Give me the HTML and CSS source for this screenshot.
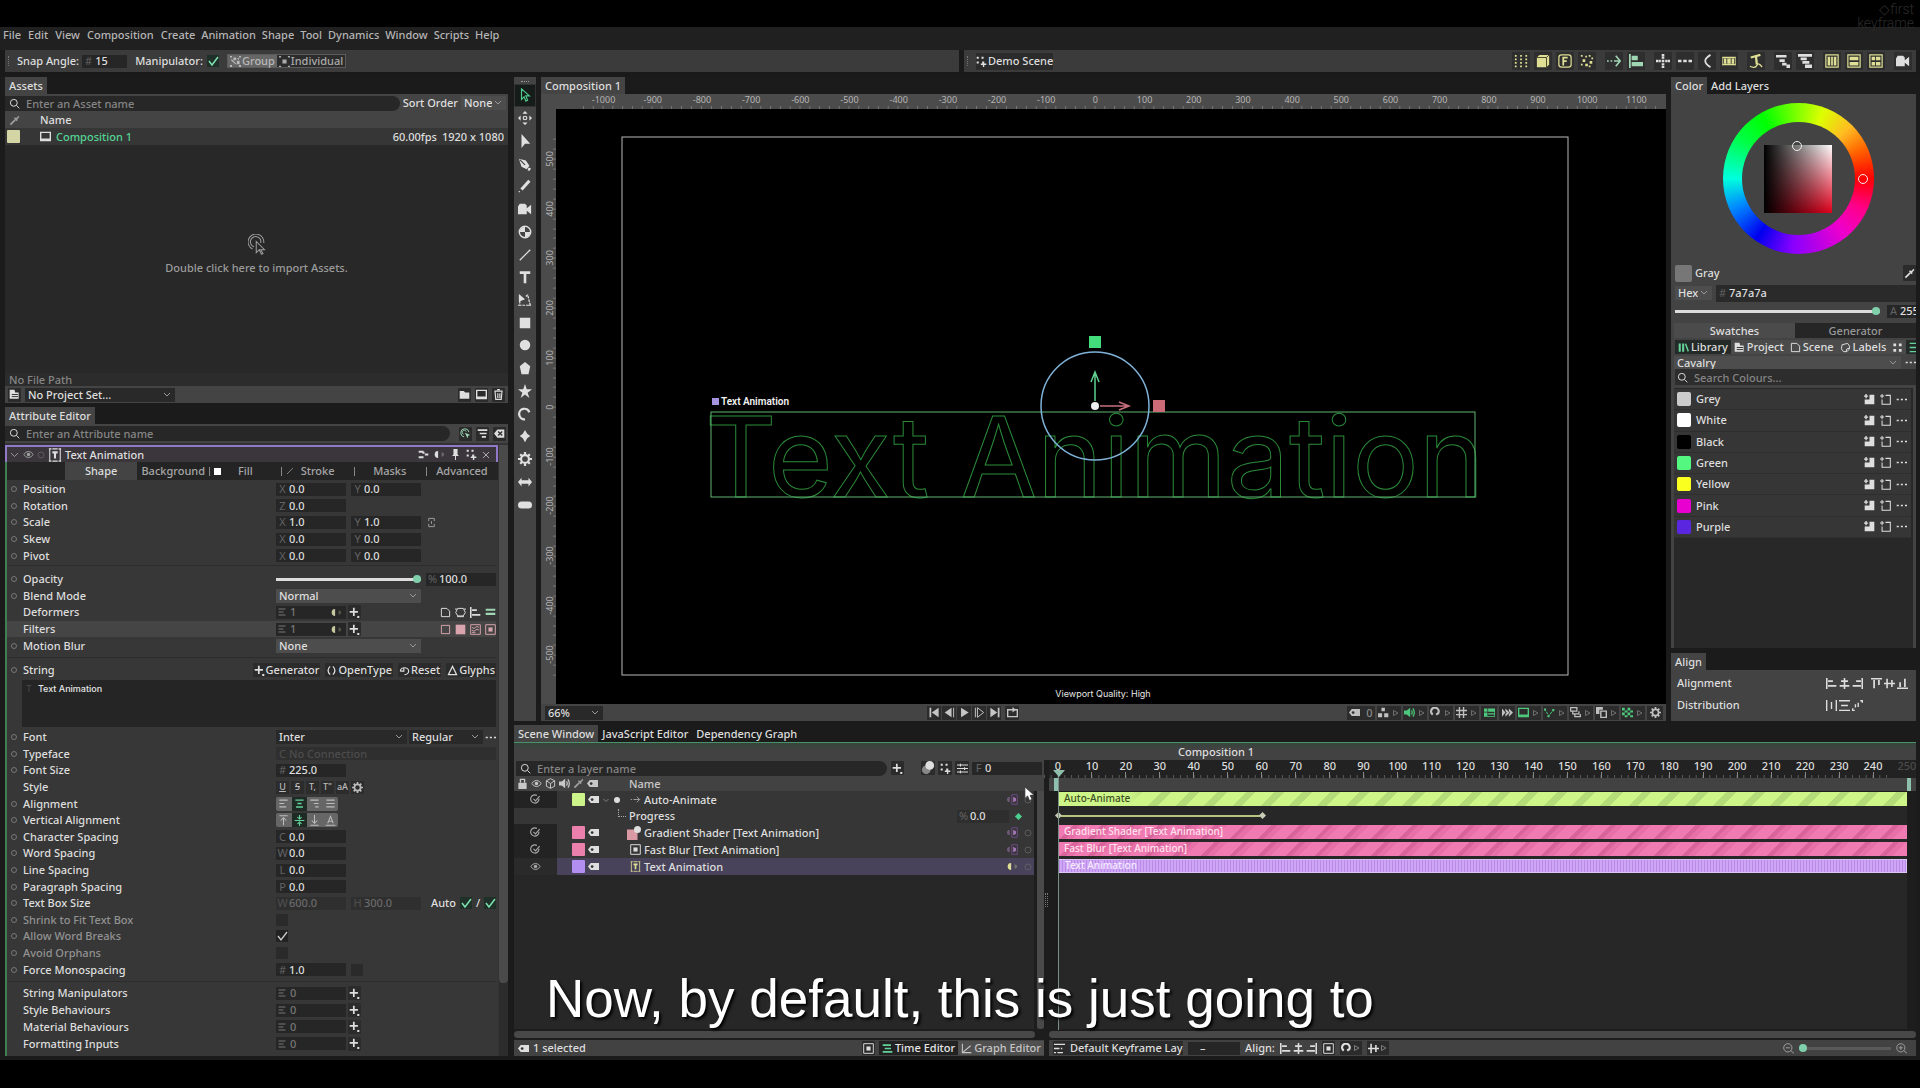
FILE: index.html
```html
<!DOCTYPE html>
<html lang="en">
<head>
<meta charset="utf-8">
<title>Cavalry – Composition 1</title>
<link rel="stylesheet" href="styles.css">
</head>
<body>
<svg class="sprite" aria-hidden="true">
  <symbol id="search" viewBox="0 0 16 16"><circle cx="7" cy="7" r="5"/><path d="M11 11l4 4"/></symbol>
  <symbol id="chev" viewBox="0 0 16 16"><path d="M3 6l5 5 5-5"/></symbol>
  <symbol id="play" viewBox="0 0 16 16"><path class="f" d="M3 1l11 7-11 7z"/></symbol>
  <symbol id="tri" viewBox="0 0 16 16"><path d="M3 3l9 5-9 5z"/></symbol>
  <symbol id="first" viewBox="0 0 16 16"><path d="M2 1v14" stroke-width="2.5"/><path class="f" d="M14 1v14L4 8z"/></symbol>
  <symbol id="prev" viewBox="0 0 16 16"><path d="M14 1v14"/><path class="f" d="M11 1v14L1 8z"/></symbol>
  <symbol id="next" viewBox="0 0 16 16"><path d="M2 1v14"/><path d="M5 1v14l9-7z"/></symbol>
  <symbol id="last" viewBox="0 0 16 16"><path d="M14 1v14" stroke-width="2.5"/><path class="f" d="M2 1v14l10-7z"/></symbol>
  <symbol id="loop" viewBox="0 0 16 16"><path d="M5 4H1v10h14V4h-4M5 4h5" stroke-width="2"/><path class="f" d="M8 0l5 4-5 4z"/></symbol>
  <symbol id="eye" viewBox="0 0 16 16"><path d="M1 8q7-9 14 0q-7 9-14 0z"/><circle class="f" cx="8" cy="8" r="2.5"/></symbol>
  <symbol id="ring" viewBox="0 0 16 16"><circle cx="8" cy="8" r="6"/></symbol>
  <symbol id="dot" viewBox="0 0 16 16"><circle class="f" cx="8" cy="8" r="6"/></symbol>
  <symbol id="textbox" viewBox="0 0 16 16"><path d="M2 1v14M14 1v14M1 1h3M12 1h3M1 15h3M12 15h3M5 15h6M5 1h6" stroke-width="1.2"/><path d="M5 5h6M8 5v7" stroke-width="2.4"/></symbol>
  <symbol id="dropper" viewBox="0 0 16 16"><path d="M2 14l7-7" stroke-width="2.5"/><path class="f" d="M8 5l3-1 3-3 1 2-3 3-1 3z"/><path d="M8 4l4 4" stroke-width="2"/></symbol>
  <symbol id="comp" viewBox="0 0 16 16"><path d="M1 2h14v12H1zM1 12h14" stroke-width="2"/></symbol>
  <symbol id="hit" viewBox="0 0 24 28"><path d="M8 17a7 7 0 1 1 9-5M6 20a10.500 10.500 0 1 1 15-8M11 10v15l4-4 3 6 2-1-3-5h5z"/></symbol>
  <symbol id="folder" viewBox="0 0 16 16"><path class="f" d="M1 3h6l2 2h6v9H1z"/></symbol>
  <symbol id="project" viewBox="0 0 16 16"><path class="f" d="M1 1h7l1 4h5v9H1z"/><path d="M4 8h9M4 11h9" stroke="#333"/></symbol>
  <symbol id="trash" viewBox="0 0 16 16"><path d="M2 3h12M6 1h4M3 4l1 11h8l1-11M7 6v7M10 6v7" stroke-width="1.700"/></symbol>
  <symbol id="target" viewBox="0 0 16 16"><path d="M6 13A6 6 0 1 1 13 6M5 9a3 3 0 1 1 4-4"/><path class="f" d="M7 7l8 3-3 1-1 4z"/></symbol>
  <symbol id="stack" viewBox="0 0 16 16"><path d="M1 3h14M4 8h10M7 13h6" stroke-width="2.500"/></symbol>
  <symbol id="te" viewBox="0 0 16 16"><path d="M1 3h12M4 8h9M1 13h14" stroke-width="2.500"/></symbol>
  <symbol id="clear" viewBox="0 0 16 16"><path class="f" d="M0 8l5-6h10v12H5z"/><path d="M6 5l6 6M12 5l-6 6" stroke="#333" stroke-width="2"/></symbol>
  <symbol id="nodes" viewBox="0 0 16 16"><path d="M1 4h7M1 12h7M10 8h5M8 4v3" stroke-width="3"/></symbol>
  <symbol id="pin" viewBox="0 0 16 16"><path class="f" d="M5 0h6v8l2 2H3l2-2z"/><path d="M8 9v7"/></symbol>
  <symbol id="dots4" viewBox="0 0 16 16"><path class="f" d="M1 1h3v3H1zM8 1h3v3H8zM1 8h3v3H1zM9 8h3v3h3v2h-3v3h-2v-3H7v-2h2z"/></symbol>
  <symbol id="x" viewBox="0 0 16 16"><path d="M2 2l12 12M14 2L2 14"/></symbol>
  <symbol id="plus" viewBox="0 0 16 16"><path d="M7 1v12M1 7h12" stroke-width="2.500"/><path class="f" d="M12 13h3v3h-3z"/></symbol>
  <symbol id="conn" viewBox="0 0 16 16"><path class="f" d="M6 3v10a5 5 0 0 1 0-10z"/><path class="f" opacity=".3" d="M11 5h2l2 3-2 3h-2z"/></symbol>
  <symbol id="connout" viewBox="0 0 16 16"><path class="f" opacity=".5" d="M4 4v8a4 4 0 0 1 0-8z"/><path d="M7 1h8v14H7z" stroke="#6d4a85"/><path class="f" d="M9 4l4 2v4l-4 2z"/></symbol>
  <symbol id="lines" viewBox="0 0 16 16"><path d="M1 2h14M1 8h10M1 14h14" stroke-width="2"/></symbol>
  <symbol id="link" viewBox="0 0 16 16"><path d="M4 6V2h8v4M4 10v4h8v-4M8 6v4"/></symbol>
  <symbol id="page" viewBox="0 0 16 16"><path d="M2 2h8l4 4v8H2z"/></symbol>
  <symbol id="hex" viewBox="0 0 16 16"><path d="M4 2h8l3 6-3 5H4L1 8zM0 3h3M13 3h3M3 14h10"/></symbol>
  <symbol id="alL" viewBox="0 0 16 16"><path d="M1 0v16M3 4.500h7M3 11.500h12" stroke-width="2.500"/></symbol>
  <symbol id="alC" viewBox="0 0 16 16"><path d="M8 0v16M3 4.500h10M1 11.500h14" stroke-width="2.300"/></symbol>
  <symbol id="alR" viewBox="0 0 16 16"><path d="M15 0v16M6 4.500h7M1 11.500h12" stroke-width="2.500"/></symbol>
  <symbol id="alT" viewBox="0 0 16 16"><path d="M0 1h16M4.500 3v12M11.500 3v7" stroke-width="2.500"/></symbol>
  <symbol id="alM" viewBox="0 0 16 16"><path d="M0 8h16M4.500 1v14M11.500 3v10" stroke-width="2.300"/></symbol>
  <symbol id="alB" viewBox="0 0 16 16"><path d="M0 15h16M4.500 6v7M11.500 1v12" stroke-width="2.500"/></symbol>
  <symbol id="bars" viewBox="0 0 16 16"><path d="M1 4h14M1 10h14" stroke-width="3"/></symbol>
  <symbol id="frame" viewBox="0 0 16 16"><path d="M2 2h12v12H2z"/></symbol>
  <symbol id="fill" viewBox="0 0 16 16"><path class="f" d="M1 1h14v14H1z"/></symbol>
  <symbol id="noise" viewBox="0 0 16 16"><path d="M1 1h14v14H1zM3 5q3 3 5 0t5 0M3 9q3 3 5 0t5 0M3 12q3 2 5 0"/></symbol>
  <symbol id="blur" viewBox="0 0 16 16"><path d="M1 1h14v14H1z"/><path class="f" d="M5 5h6v6H5z"/></symbol>
  <symbol id="braces" viewBox="0 0 16 16"><path d="M6 2q-6 6 0 12M10 2q6 6 0 12" stroke-width="1.800"/></symbol>
  <symbol id="undo" viewBox="0 0 16 16"><path d="M2 9h5V4M2 9a6 5 0 1 1 6 5" stroke-width="1.800"/></symbol>
  <symbol id="delta" viewBox="0 0 16 16"><path d="M8 2l6 12H2z" stroke-width="1.800"/></symbol>
  <symbol id="gear" viewBox="0 0 16 16"><circle cx="8" cy="8" r="4.500" stroke-width="2.500"/><path d="M8 0v3M8 13v3M0 8h3M13 8h3M2.500 2.500l2 2M11.500 11.500l2 2M13.500 2.500l-2 2M4.500 11.500l-2 2" stroke-width="2.500"/></symbol>
  <symbol id="tL" viewBox="0 0 16 16"><path d="M2 3h12M2 8h7M2 13h10" stroke-width="1.700"/></symbol>
  <symbol id="tC" viewBox="0 0 16 16"><path d="M2 3h12M5 8h6M3 13h10" stroke-width="2"/></symbol>
  <symbol id="tR" viewBox="0 0 16 16"><path d="M2 3h12M7 8h7M9 13h5" stroke-width="1.700"/></symbol>
  <symbol id="tJ" viewBox="0 0 16 16"><path d="M2 3h12M2 8h12M2 13h12" stroke-width="1.700"/></symbol>
  <symbol id="vT" viewBox="0 0 16 16"><path d="M2 1h12M8 15V4M4 8l4-4 4 4" stroke-width="1.500"/></symbol>
  <symbol id="vM" viewBox="0 0 16 16"><path d="M1 8h14M8 0v6M8 10v6M5 3l3 3 3-3M5 13l3-3 3 3" stroke-width="1.500"/></symbol>
  <symbol id="vB" viewBox="0 0 16 16"><path d="M2 15h12M8 0v12M4 8l4 4 4-4" stroke-width="1.500"/></symbol>
  <symbol id="vA" viewBox="0 0 16 16"><path d="M1 15h14M4 12l4-10 4 10M5 9h6" stroke-width="1.500"/></symbol>
  <symbol id="more" viewBox="0 0 16 16"><path class="f" d="M1 7h3v2H1zM7 7h3v2H7zM13 7h3v2h-3z"/></symbol>
  <symbol id="arrow" viewBox="0 0 16 16"><path d="M4 1v12l3-3 2 5 2-1-2-5h4z" stroke-width="1.300"/></symbol>
  <symbol id="move" viewBox="0 0 16 16"><path class="f" d="M8 0l3 3H5zM8 16l3-3H5zM0 8l3-3v6zM16 8l-3-3v6z"/><circle cx="8" cy="8" r="2"/></symbol>
  <symbol id="solid" viewBox="0 0 16 16"><path class="f" d="M4 0l10 11H8l-4 5z"/></symbol>
  <symbol id="pen" viewBox="0 0 16 16"><path class="f" d="M1 2l8 2 4 6-3 4-6-3z"/><path class="f" d="M12 12l3 1-2 3-2-1z"/><path d="M2 3l6 6" stroke="#444"/></symbol>
  <symbol id="pencil" viewBox="0 0 16 16"><path d="M4 12l9-10" stroke-width="3.500"/><path d="M1 15l1-1"/></symbol>
  <symbol id="camera" viewBox="0 0 16 16"><path class="f" d="M0 5l2-3h6l2 2v3l5-4v11l-5-4v4H0z"/></symbol>
  <symbol id="quad" viewBox="0 0 16 16"><circle cx="8" cy="8" r="6.500" stroke-width="1.600"/><path class="f" d="M8 8V2a6 6 0 0 0-6 6zM8 8v6a6 6 0 0 0 6-6z"/></symbol>
  <symbol id="line" viewBox="0 0 16 16"><path d="M2 14L14 2"/></symbol>
  <symbol id="T" viewBox="0 0 16 16"><path d="M2 3h12M8 3v12" stroke-width="3"/></symbol>
  <symbol id="edit" viewBox="0 0 16 16"><path class="f" d="M1 1l7 6-7 3z"/><path d="M2 9v5h12M14 14l-3-12M9 4l2-2M0 14h4M12 14h4" stroke-dasharray="3 1"/></symbol>
  <symbol id="rect" viewBox="0 0 16 16"><path class="f" d="M2 2h12v12H2z"/></symbol>
  <symbol id="penta" viewBox="0 0 16 16"><path class="f" d="M8 1l6 5-2 9H4L2 6z"/></symbol>
  <symbol id="star" viewBox="0 0 16 16"><path class="f" d="M8 0l2 6h6l-5 4 2 6-5-4-5 4 2-6-5-4h6z"/></symbol>
  <symbol id="arc" viewBox="0 0 16 16"><path d="M8 14A6 6 0 1 1 13 6" stroke-width="2.600"/></symbol>
  <symbol id="spark" viewBox="0 0 16 16"><path class="f" d="M8 1l2.500 4.500L14 8l-3.500 2.500L8 15l-2.500-4.500L2 8l3.500-2.500z"/></symbol>
  <symbol id="lr" viewBox="0 0 16 16"><path class="f" d="M0 8l4-5v3h8V3l4 5-4 5v-3H4v3z"/></symbol>
  <symbol id="pill" viewBox="0 0 16 16"><rect class="f" x="0" y="4" width="16" height="8" rx="4"/></symbol>
  <symbol id="grid9" viewBox="0 0 16 16"><path class="f" d="M1 1h2v2H1zM7 1h2v2H7zM13 1h2v2h-2zM1 5h2v2H1zM7 5h2v2H7zM13 5h2v2h-2zM1 9h2v2H1zM7 9h2v2H7zM13 9h2v2h-2zM1 13h2v2H1zM7 13h2v2H7zM13 13h2v2h-2z"/></symbol>
  <symbol id="cube" viewBox="0 0 16 16"><path class="f" d="M1 4l3-3h11v11l-3 3H1z"/><path d="M1 4h11v11M12 4l3-3" stroke="#3a3a20" stroke-width="1"/></symbol>
  <symbol id="F" viewBox="0 0 16 16"><rect x="1" y="1" width="14" height="14" rx="3"/><path d="M6 13V4h5M6 8h4" stroke-width="2"/></symbol>
  <symbol id="scatter" viewBox="0 0 16 16"><path class="f" d="M1 1h2v2H1zM6 2h2v2H6zM3 6h3v3H3zM10 1h2v2h-2zM13 4h2v2h-2zM11 8h3v3h-3zM1 11h2v2H1zM6 11h3v3H6zM10 13h2v2h-2z"/></symbol>
  <symbol id="dashr" viewBox="0 0 16 16"><path d="M0 8h2M4 8h2M8 8h7M10 2l5 6-5 6" stroke-width="1.800"/></symbol>
  <symbol id="flag" viewBox="0 0 16 16"><path class="f" d="M0 0h2v16H0zM3 2h7v5H3zM3 9h13v5H3z"/></symbol>
  <symbol id="cross" viewBox="0 0 16 16"><path class="f" d="M6.500 0h3v3h-3zM6.500 6.500h3v3h-3zM6.500 13h3v3h-3zM0 6.500h3v3H0zM13 6.500h3v3h-3zM3.500 6.500h2v3h-2zM10.500 6.500h2v3h-2zM6.500 3.500h3v2h-3zM6.500 10.500h3v2h-3z"/></symbol>
  <symbol id="dots3" viewBox="0 0 16 16"><path class="f" d="M0 6.500h4v3H0zM6 6.500h4v3H6zM12 6.500h4v3h-4z"/></symbol>
  <symbol id="curve" viewBox="0 0 16 16"><path d="M12 1Q0 8 12 15" stroke-width="2"/></symbol>
  <symbol id="film" viewBox="0 0 16 16"><path d="M0 3v10M16 3v10M1 4h14M1 12h14" stroke-width="1.500"/><path class="f" d="M2 5h3v6H2zM6 5h4v6H6zM11 5h3v6h-3z"/></symbol>
  <symbol id="tpath" viewBox="0 0 16 16"><path d="M2 4l11-3M8 3l1 9" stroke-width="2.600"/><path d="M1 14q6 3 8-1t6 2"/></symbol>
  <symbol id="stairs" viewBox="0 0 16 16"><path class="f" d="M0 1h12v3H0zM4 6h6v3H4zM7 10h5v3H7zM12 12h4v4h-4z"/></symbol>
  <symbol id="stairs2" viewBox="0 0 16 16"><path class="f" d="M0 0h16v3H0zM3 4h7v3H3zM5 8h8v3H5zM8 12h8v4H8z"/></symbol>
  <symbol id="cols" viewBox="0 0 16 16"><path d="M1 1h14v14H1z"/><path class="f" d="M3 3h3v10H3zM7 3h2v10H7zM10 3h3v10h-3z"/></symbol>
  <symbol id="rows" viewBox="0 0 16 16"><path d="M1 1h14v14H1z"/><path class="f" d="M3 3h10v4H3zM3 9h10v4H3z"/></symbol>
  <symbol id="cells" viewBox="0 0 16 16"><path d="M1 1h14v14H1z"/><path class="f" d="M3 3h4v4H3zM8 3h5v4H8zM3 9h4v4H3zM8 9h5v4H8z"/></symbol>
  <symbol id="group" viewBox="0 0 16 16"><path class="f" d="M0 0h3v2H0zM5 2h4v4H5zM10 7h4v5h-4zM13 0h3v2h-3zM0 13h3v3H0zM13 13h3v3h-3zM2 4l8 8H8L2 7zM10 3h3v3z"/></symbol>
  <symbol id="indiv" viewBox="0 0 16 16"><path class="f" d="M5 5h6v6H5zM0 0h3v2H0zM13 0h3v2h-3zM0 14h3v2H0zM13 14h3v2h-3z"/></symbol>
  <symbol id="tag" viewBox="0 0 16 16"><path class="f" d="M0 8l4-5h12v10H4z"/><circle cx="6" cy="8" r="2" fill="#333" stroke="none"/></symbol>
  <symbol id="balls" viewBox="0 0 16 16"><path class="f" d="M5 1h5v5H5zM0 9h6v6H0zM9 9h6v6H9z"/></symbol>
  <symbol id="sound" viewBox="0 0 16 16"><path class="f" d="M0 5h4l5-4v14l-5-4H0z"/><path d="M11 5q2 3 0 6M13 2q4 6 0 12" stroke-width="1.800"/></symbol>
  <symbol id="magnet" viewBox="0 0 16 16"><path d="M4 11A5.500 5.500 0 1 1 12 9L9 11" stroke-width="3.200"/></symbol>
  <symbol id="hash" viewBox="0 0 16 16"><path d="M5 0v16M11 0v16M0 5h16M0 11h16" stroke-width="2"/></symbol>
  <symbol id="guide" viewBox="0 0 16 16"><path class="f" d="M0 2h5v5H0zM6 2h10v12H0V8h5v5h10v-2H6V9h9V7H6z"/></symbol>
  <symbol id="ff" viewBox="0 0 16 16"><path class="f" d="M0 2l5 6-5 6zM5 2l6 6-6 6V10l2-2-2-2zM10 2l6 6-6 6v-4l2-2-2-2z"/></symbol>
  <symbol id="vee" viewBox="0 0 16 16"><path d="M1 3l6 10L13 5" stroke-dasharray="4 1"/><path class="f" d="M0 2h3v3H0zM12 3h3v3h-3zM5 12h3v3H5z"/></symbol>
  <symbol id="layers" viewBox="0 0 16 16"><path d="M1 1h9v5H1zM4 6v4h9V6M7 10v4h8v-4" stroke-width="1.800"/></symbol>
  <symbol id="squares" viewBox="0 0 16 16"><path class="f" d="M0 0h10v4H5v6H0z"/><path d="M7 6h8v9H7z" stroke-width="2"/></symbol>
  <symbol id="checker" viewBox="0 0 16 16"><path class="f" d="M0 1h4v4H0zM8 1h4v4H8zM4 5h4v3H4zM12 5h4v3h-4zM0 8h4v4H0zM8 8h4v4H8zM4 12h4v3H4zM12 12h4v3h-4z"/></symbol>
  <symbol id="lock" viewBox="0 0 16 16"><path class="f" d="M2 7h12v9H2z"/><path d="M5 7V2h6v5" stroke-width="2"/></symbol>
  <symbol id="box" viewBox="0 0 16 16"><path d="M8 1l6 3v8l-6 3-6-3V4zM2 4l6 4 6-4M8 8v7"/></symbol>
  <symbol id="okring" viewBox="0 0 16 16"><path d="M13 7a6 6 0 1 1-3-5M5 7l3 3 6-7" stroke-width="1.700"/></symbol>
  <symbol id="grad" viewBox="0 0 16 16"><path d="M0 4h12v12H0z" fill="#d99aa6" stroke="none"/><circle class="f" cx="12" cy="4" r="4"/></symbol>
  <symbol id="sphere" viewBox="0 0 16 16"><circle cx="6" cy="10" r="5" fill="#888" stroke="none"/><circle class="f" cx="10" cy="5" r="5"/></symbol>
  <symbol id="sliders" viewBox="0 0 16 16"><path d="M0 3h16M0 8h16M0 13h16M5 1v4M11 6v4M5 11v4" stroke-width="1.600"/></symbol>
  <symbol id="books" viewBox="0 0 16 16"><path class="f" d="M1 2h3v12H1zM6 2h3v12H6zM10 3l2-1 4 11-2 1z"/></symbol>
  <symbol id="label" viewBox="0 0 16 16"><path d="M10 14H5L2 10l1-6 8-2 3 4-1 5z"/><path d="M9 14l1-4 4-1"/></symbol>
  <symbol id="mini4" viewBox="0 0 16 16"><path class="f" d="M2 2h4v4H2zM10 2h4v4h-4zM2 10h4v4H2zM10 10h4v4h-4z"/></symbol>
  <symbol id="addfill" viewBox="0 0 16 16"><path class="f" d="M1 8h7V1h7v14H1zM2 0h2v6H2zM0 2h6v2H0z"/></symbol>
  <symbol id="addline" viewBox="0 0 16 16"><path d="M8 2h7v13H3V8M3 0v6M0 3h6" stroke-width="1.500"/></symbol>
  <symbol id="dV" viewBox="0 0 16 16"><path d="M1 0v16M15 0v16M8 3v10" stroke-width="2"/></symbol>
  <symbol id="dH" viewBox="0 0 16 16"><path d="M0 1h16M0 15h16M3 8h10" stroke-width="2"/></symbol>
  <symbol id="dS" viewBox="0 0 16 16"><path d="M0 15h4M1 12v4M5 6v5M9 4v6M12 1h4M15 0v4" stroke-width="2"/></symbol>
  <symbol id="graph" viewBox="0 0 16 16"><path d="M2 1v13h13M2 14L14 4" stroke-width="1.600"/></symbol>
  <symbol id="keys" viewBox="0 0 16 16"><path d="M0 2h16M0 8h8M10 8h2M0 14h3M5 14h8" stroke-width="2"/></symbol>
  <symbol id="zout" viewBox="0 0 16 16"><circle cx="7" cy="7" r="6"/><path d="M4 7h6M11 11l5 4"/></symbol>
  <symbol id="zin" viewBox="0 0 16 16"><circle cx="7" cy="7" r="6"/><path d="M4 7h6M7 4v6M11 11l5 4"/></symbol>
  <symbol id="plain" viewBox="0 0 16 16"><path d="M1 8h2M5 8h9M10 4l4 4-4 4"/></symbol>
</svg>

<header class="menubar">
  <nav class="menu">
    <a href="#">File</a><a href="#">Edit</a><a href="#">View</a><a href="#">Composition</a><a href="#">Create</a><a href="#">Animation</a><a href="#">Shape</a><a href="#">Tool</a><a href="#">Dynamics</a><a href="#">Window</a><a href="#">Scripts</a><a href="#">Help</a>
  </nav>
  <p class="brand"><span>◇first</span><span>keyframe</span></p>
</header>

<div class="toolbars">
  <div class="toolbar">
    <i class="grip"></i>
    <label for="snap">Snap Angle:</label>
    <span class="num snap"><b>#</b><input id="snap" value="15"></span>
    <label for="manip" class="manip">Manipulator:</label><input type="checkbox" class="tick green" id="manip" checked>
    <span class="seg"><button class="on"><svg class="i"><use href="#group"/></svg>Group</button><button><svg class="i"><use href="#indiv"/></svg>Individual</button></span>
  </div>
  <div class="toolbar">
    <i class="grip"></i>
    <button class="tb demo"><svg class="i"><use href="#dots4"/></svg>Demo Scene</button>
    <div class="quick">
      <button class="yel"><svg class="i l"><use href="#grid9"/></svg></button><button class="yel"><svg class="i l"><use href="#cube"/></svg></button><button class="yel"><svg class="i l"><use href="#F"/></svg></button><button class="yel"><svg class="i l"><use href="#scatter"/></svg></button>
      <button class="mint gap"><svg class="i l"><use href="#dashr"/></svg></button><button class="mint"><svg class="i l"><use href="#flag"/></svg></button>
      <button class="gap"><svg class="i l"><use href="#cross"/></svg></button><button><svg class="i l"><use href="#dots3"/></svg></button><button><svg class="i l"><use href="#curve"/></svg></button><button class="yel"><svg class="i l"><use href="#film"/></svg></button>
      <button class="yel gap"><svg class="i l"><use href="#tpath"/></svg></button>
      <button class="gap"><svg class="i l"><use href="#stairs"/></svg></button><button><svg class="i l"><use href="#stairs2"/></svg></button>
      <button class="yel gap"><svg class="i l"><use href="#cols"/></svg></button><button class="yel"><svg class="i l"><use href="#rows"/></svg></button><button class="yel"><svg class="i l"><use href="#cells"/></svg></button>
      <button class="gap"><svg class="i l"><use href="#camera"/></svg></button>
    </div>
  </div>
</div>

<main class="work">
  <div class="left">
    <section class="panel assets">
      <div class="tabs"><button class="on">Assets</button></div>
      <div class="row search-row">
        <label class="search"><svg class="i"><use href="#search"/></svg><input placeholder="Enter an Asset name" aria-label="Asset name"></label>
        <label for="sort">Sort Order</label>
        <select id="sort" class="sel sort"><option>None</option></select>
      </div>
      <div class="row asset-head"><svg class="i dim"><use href="#dropper"/></svg><span>Name</span></div>
      <div class="row asset-row"><i class="sw" style="background:#d3d6a4"></i><svg class="i"><use href="#comp"/></svg><a href="#">Composition 1</a><span class="meta">60.00fps</span><span>1920 x 1080</span></div>
      <div class="drop"><svg class="hit"><use href="#hit"/></svg><p>Double click here to import Assets.</p></div>
      <div class="path">No File Path</div>
      <div class="row asset-foot">
        <button class="tb"><svg class="i"><use href="#project"/></svg></button>
        <select class="sel dark proj" aria-label="Project"><option>No Project Set...</option></select>
        <span class="push"></span>
        <button class="tb"><svg class="i"><use href="#folder"/></svg></button><button class="tb"><svg class="i"><use href="#comp"/></svg></button><button class="tb"><svg class="i"><use href="#trash"/></svg></button>
      </div>
    </section>

    <section class="panel attrs">
      <div class="tabs"><button class="on">Attribute Editor</button></div>
      <div class="row attr-search">
        <label class="search"><svg class="i"><use href="#search"/></svg><input placeholder="Enter an Attribute name" aria-label="Attribute name"></label>
        <button class="tb mint"><svg class="i"><use href="#target"/></svg></button><button class="tb"><svg class="i"><use href="#stack"/></svg></button><button class="tb"><svg class="i"><use href="#clear"/></svg></button>
      </div>
      <div class="attr-wrap">
        <div class="attr-body">
          <div class="attr-head">
            <svg class="i dim"><use href="#chev"/></svg><svg class="i dim"><use href="#eye"/></svg><svg class="i s faint"><use href="#ring"/></svg><svg class="i l"><use href="#textbox"/></svg><h2>Text Animation</h2>
            <svg class="i"><use href="#nodes"/></svg><svg class="i"><use href="#conn"/></svg><svg class="i"><use href="#pin"/></svg><svg class="i"><use href="#dots4"/></svg><svg class="i s"><use href="#x"/></svg>
          </div>
          <div class="subtabs"><button class="on">Shape</button><button>Background</button><button class="bar"><i class="white"></i>Fill</button><button class="bar"><svg class="i s"><use href="#line"/></svg>Stroke</button><button class="bar">Masks</button><button class="bar">Advanced</button></div>
          <div class="grp g5 first">
            <div class="at"><i class="o"></i><label for="px">Position</label><span class="num"><b>X</b><input id="px" value="0.0"></span><span class="num"><b>Y</b><input aria-label="Position Y" value="0.0"></span></div>
            <div class="at"><i class="o"></i><label for="rz">Rotation</label><span class="num"><b>Z</b><input id="rz" value="0.0"></span></div>
            <div class="at"><i class="o"></i><label for="sx">Scale</label><span class="num"><b>X</b><input id="sx" value="1.0"></span><span class="num"><b>Y</b><input aria-label="Scale Y" value="1.0"></span><svg class="i dim"><use href="#link"/></svg></div>
            <div class="at"><i class="o"></i><label for="kx">Skew</label><span class="num"><b>X</b><input id="kx" value="0.0"></span><span class="num"><b>Y</b><input aria-label="Skew Y" value="0.0"></span></div>
            <div class="at"><i class="o"></i><label for="vx">Pivot</label><span class="num"><b>X</b><input id="vx" value="0.0"></span><span class="num"><b>Y</b><input aria-label="Pivot Y" value="0.0"></span></div>
          </div>
          <div class="grp g5">
            <div class="at"><i class="o"></i><label for="op">Opacity</label><input type="range" id="op" class="slider wide" value="100"><span class="num"><b>%</b><input aria-label="Opacity percent" value="100.0"></span></div>
            <div class="at"><i class="o"></i><label for="bm">Blend Mode</label><select id="bm" class="sel wide"><option>Normal</option></select></div>
            <div class="at"><i></i><span>Deformers</span><span class="num list"><svg class="i s"><use href="#lines"/></svg>1<svg class="i cn"><use href="#conn"/></svg></span><button class="tb add"><svg class="i"><use href="#plus"/></svg></button><span class="minis"><svg class="i"><use href="#page"/></svg><svg class="i"><use href="#hex"/></svg><svg class="i"><use href="#alL"/></svg><svg class="i mint"><use href="#bars"/></svg></span></div>
            <div class="at hot"><i></i><span>Filters</span><span class="num list"><svg class="i s"><use href="#lines"/></svg>1<svg class="i cn"><use href="#conn"/></svg></span><button class="tb add"><svg class="i"><use href="#plus"/></svg></button><span class="minis pinkish"><svg class="i"><use href="#frame"/></svg><svg class="i"><use href="#fill"/></svg><svg class="i"><use href="#noise"/></svg><svg class="i"><use href="#blur"/></svg></span></div>
            <div class="at"><i class="o"></i><label for="mb">Motion Blur</label><select id="mb" class="sel wide"><option>None</option></select></div>
          </div>
          <div class="string">
            <div class="string-head"><i class="o"></i><label for="str">String</label><button class="tb"><svg class="i"><use href="#plus"/></svg>Generator</button><button class="tb"><svg class="i"><use href="#braces"/></svg>OpenType</button><button class="tb"><svg class="i"><use href="#undo"/></svg>Reset</button><button class="tb"><svg class="i"><use href="#delta"/></svg>Glyphs</button></div>
            <div class="area"><span>T</span><textarea id="str">Text Animation</textarea></div>
          </div>
          <div class="grp g15">
            <div class="at"><i class="o"></i><label for="fo">Font</label><span class="fontrow"><select id="fo" class="sel dark"><option>Inter</option></select><select class="sel dark" aria-label="Weight"><option>Regular</option></select><svg class="i"><use href="#more"/></svg></span></div>
            <div class="at"><i class="o"></i><label for="tf">Typeface</label><span class="num full off"><b>C</b><input id="tf" value="No Connection" disabled></span></div>
            <div class="at"><i class="o"></i><label for="fs">Font Size</label><span class="num"><b>#</b><input id="fs" value="225.0"></span></div>
            <div class="at"><i></i><span>Style</span><span class="styles"><button><u>U</u></button><button><s>S</s></button><button>T,</button><button>T"</button><button>aA</button><button><svg class="i"><use href="#gear"/></svg></button></span></div>
            <div class="at"><i class="o"></i><span>Alignment</span><span class="aligns"><button><svg class="i"><use href="#tL"/></svg></button><button class="on"><svg class="i"><use href="#tC"/></svg></button><button><svg class="i"><use href="#tR"/></svg></button><button><svg class="i"><use href="#tJ"/></svg></button></span></div>
            <div class="at"><i class="o"></i><span>Vertical Alignment</span><span class="aligns"><button><svg class="i"><use href="#vT"/></svg></button><button class="on"><svg class="i"><use href="#vM"/></svg></button><button><svg class="i"><use href="#vB"/></svg></button><button><svg class="i"><use href="#vA"/></svg></button></span></div>
            <div class="at"><i class="o"></i><label for="cs">Character Spacing</label><span class="num"><b>C</b><input id="cs" value="0.0"></span></div>
            <div class="at"><i class="o"></i><label for="ws">Word Spacing</label><span class="num"><b>W</b><input id="ws" value="0.0"></span></div>
            <div class="at"><i class="o"></i><label for="ls">Line Spacing</label><span class="num"><b>L</b><input id="ls" value="0.0"></span></div>
            <div class="at"><i class="o"></i><label for="ps">Paragraph Spacing</label><span class="num"><b>P</b><input id="ps" value="0.0"></span></div>
            <div class="at"><i class="o"></i><label for="tb">Text Box Size</label><span class="num off"><b>W</b><input id="tb" value="600.0" disabled></span><span class="num off"><b>H</b><input aria-label="Height" value="300.0" disabled></span><span class="auto">Auto <input type="checkbox" class="tick green" aria-label="Auto width" checked>/<input type="checkbox" class="tick green" aria-label="Auto height" checked></span></div>
            <div class="at mute"><i class="o"></i><label for="sh">Shrink to Fit Text Box</label><input type="checkbox" class="tick" id="sh"></div>
            <div class="at mute"><i class="o"></i><label for="aw">Allow Word Breaks</label><input type="checkbox" class="tick" id="aw" checked></div>
            <div class="at mute"><i class="o"></i><label for="ao">Avoid Orphans</label><input type="checkbox" class="tick" id="ao"></div>
            <div class="at"><i class="o"></i><label for="fm">Force Monospacing</label><span class="num"><b>#</b><input id="fm" value="1.0"></span><input type="checkbox" class="tick" aria-label="Enable monospacing"></div>
          </div>
          <div class="grp g4">
            <div class="at"><i></i><span>String Manipulators</span><span class="num list"><svg class="i s"><use href="#lines"/></svg>0</span><button class="tb add"><svg class="i"><use href="#plus"/></svg></button></div>
            <div class="at"><i></i><span>Style Behaviours</span><span class="num list"><svg class="i s"><use href="#lines"/></svg>0</span><button class="tb add"><svg class="i"><use href="#plus"/></svg></button></div>
            <div class="at"><i></i><span>Material Behaviours</span><span class="num list"><svg class="i s"><use href="#lines"/></svg>0</span><button class="tb add"><svg class="i"><use href="#plus"/></svg></button></div>
            <div class="at"><i></i><span>Formatting Inputs</span><span class="num list"><svg class="i s"><use href="#lines"/></svg>0</span><button class="tb add"><svg class="i"><use href="#plus"/></svg></button></div>
          </div>
        </div>
        <div class="vscroll"><i></i></div>
      </div>
    </section>
  </div>

  <div class="right">
    <div class="top">
      <aside class="tools">
        <i class="handle"></i>
        <div class="toollist">
          <button class="on"><svg class="i l"><use href="#arrow"/></svg></button><button><svg class="i l"><use href="#move"/></svg></button><button><svg class="i l"><use href="#solid"/></svg></button><button><svg class="i l"><use href="#pen"/></svg></button><button><svg class="i l"><use href="#pencil"/></svg></button><button><svg class="i l"><use href="#camera"/></svg></button><button><svg class="i l"><use href="#quad"/></svg></button><button><svg class="i l"><use href="#line"/></svg></button><button><svg class="i l"><use href="#T"/></svg></button><button><svg class="i l"><use href="#edit"/></svg></button><button><svg class="i l"><use href="#rect"/></svg></button><button><svg class="i l"><use href="#dot"/></svg></button><button><svg class="i l"><use href="#penta"/></svg></button><button><svg class="i l"><use href="#star"/></svg></button><button><svg class="i l"><use href="#arc"/></svg></button><button><svg class="i l"><use href="#spark"/></svg></button><button><svg class="i l"><use href="#gear"/></svg></button><button><svg class="i l"><use href="#lr"/></svg></button><button><svg class="i l"><use href="#pill"/></svg></button>
        </div>
      </aside>

      <section class="panel view">
        <div class="tabs"><button class="on">Composition 1</button></div>
        <div class="hruler"><span>-1000</span><span>-900</span><span>-800</span><span>-700</span><span>-600</span><span>-500</span><span>-400</span><span>-300</span><span>-200</span><span>-100</span><span>0</span><span>100</span><span>200</span><span>300</span><span>400</span><span>500</span><span>600</span><span>700</span><span>800</span><span>900</span><span>1000</span><span>1100</span></div>
        <div class="stage">
          <div class="vruler"><span>500</span><span>400</span><span>300</span><span>200</span><span>100</span><span>0</span><span>-100</span><span>-200</span><span>-300</span><span>-400</span><span>-500</span></div>
          <svg class="canvas" viewBox="0 0 1110 595">
            <rect x="66" y="28" width="946" height="538" fill="none" stroke="#b9b9b9"/>
            <text class="outline" x="149" y="388">Text Animation</text>
            <rect x="155" y="303" width="764" height="85" fill="none" stroke="#5fb573"/>
            <rect x="156" y="289" width="7" height="7" fill="#a593e0" stroke="none"/>
            <text class="tagname" x="165" y="296">Text Animation</text>
            <circle cx="539" cy="297" r="54" fill="none" stroke="#7fb2d8" stroke-width="1.500"/>
            <path d="M539 292v-28M535 273l4-10 4 10" fill="none" stroke="#5fd08f" stroke-width="1.500"/>
            <path d="M544 297h29M563 293l10 4-10 4" fill="none" stroke="#c8707f" stroke-width="1.500"/>
            <circle cx="539" cy="297" r="4" fill="#eee" stroke="none"/>
            <rect x="533" y="227" width="12" height="12" fill="#43dd7c" stroke="none"/>
            <rect x="597" y="291" width="12" height="12" fill="#cc6a78" stroke="none"/>
            <text class="quality" x="547" y="588">Viewport Quality: High</text>
          </svg>
        </div>
        <div class="viewbar">
          <select class="sel dark zoom" aria-label="Zoom"><option>66%</option></select>
          <div class="transport"><button><svg class="i"><use href="#first"/></svg></button><button><svg class="i"><use href="#prev"/></svg></button><button><svg class="i"><use href="#play"/></svg></button><button><svg class="i"><use href="#next"/></svg></button><button><svg class="i"><use href="#last"/></svg></button><button><svg class="i"><use href="#loop"/></svg></button></div>
          <div class="opts">
            <button><svg class="i"><use href="#tag"/></svg><span class="zero">0</span></button>
            <button><svg class="i"><use href="#balls"/></svg><svg class="i s"><use href="#tri"/></svg></button>
            <button class="gr"><svg class="i"><use href="#sound"/></svg><svg class="i s"><use href="#tri"/></svg></button>
            <button><svg class="i"><use href="#magnet"/></svg><svg class="i s"><use href="#tri"/></svg></button>
            <button><svg class="i"><use href="#hash"/></svg><svg class="i s"><use href="#tri"/></svg></button>
            <button class="gr one"><svg class="i"><use href="#guide"/></svg></button>
            <button class="one"><svg class="i"><use href="#ff"/></svg></button>
            <button class="gr"><svg class="i"><use href="#comp"/></svg><svg class="i s"><use href="#tri"/></svg></button>
            <button class="gr"><svg class="i"><use href="#vee"/></svg><svg class="i s"><use href="#tri"/></svg></button>
            <button><svg class="i"><use href="#layers"/></svg><svg class="i s"><use href="#tri"/></svg></button>
            <button><svg class="i"><use href="#squares"/></svg><svg class="i s"><use href="#tri"/></svg></button>
            <button class="gr"><svg class="i"><use href="#checker"/></svg><svg class="i s"><use href="#tri"/></svg></button>
            <button class="one"><svg class="i"><use href="#gear"/></svg></button>
          </div>
        </div>
      </section>

      <aside class="side">
        <section class="panel color">
          <div class="tabs"><button class="on">Color</button><button>Add Layers</button></div>
          <div class="picker"><div class="wheel"><div class="hole"><div class="sv"></div></div><i class="knob k1"></i><i class="knob k2"></i></div></div>
          <div class="row cname"><i class="gray"></i><span>Gray</span><button class="tb"><svg class="i"><use href="#dropper"/></svg></button></div>
          <div class="row hexrow"><select class="sel hexsel" aria-label="Colour format"><option>Hex</option></select><span class="num"><b>#</b><input aria-label="Hex value" value="7a7a7a"></span></div>
          <div class="row alpha"><input type="range" class="slider" value="100" aria-label="Alpha"><span class="num"><b>A</b><input aria-label="Alpha value" value="255"></span></div>
          <div class="halves"><button class="on">Swatches</button><button>Generator</button></div>
          <div class="row libs"><button class="on"><svg class="i"><use href="#books"/></svg>Library</button><button><svg class="i"><use href="#project"/></svg>Project</button><button><svg class="i"><use href="#page"/></svg>Scene</button><button><svg class="i"><use href="#label"/></svg>Labels</button><button class="last"><svg class="i"><use href="#mini4"/></svg></button><button class="on"><svg class="i"><use href="#lines"/></svg></button></div>
          <div class="row cav"><select class="sel" aria-label="Palette"><option>Cavalry</option></select><svg class="i"><use href="#more"/></svg></div>
          <label class="search flat"><svg class="i"><use href="#search"/></svg><input placeholder="Search Colours..." aria-label="Search colours"></label>
          <div class="swatches">
            <ul>
              <li><i style="background:#cbcbcb"></i><span>Grey</span><svg class="i"><use href="#addfill"/></svg><svg class="i"><use href="#addline"/></svg><svg class="i"><use href="#more"/></svg></li>
              <li><i style="background:#ffffff"></i><span>White</span><svg class="i"><use href="#addfill"/></svg><svg class="i"><use href="#addline"/></svg><svg class="i"><use href="#more"/></svg></li>
              <li><i style="background:#000000"></i><span>Black</span><svg class="i"><use href="#addfill"/></svg><svg class="i"><use href="#addline"/></svg><svg class="i"><use href="#more"/></svg></li>
              <li><i style="background:#54f77f"></i><span>Green</span><svg class="i"><use href="#addfill"/></svg><svg class="i"><use href="#addline"/></svg><svg class="i"><use href="#more"/></svg></li>
              <li><i style="background:#fbff20"></i><span>Yellow</span><svg class="i"><use href="#addfill"/></svg><svg class="i"><use href="#addline"/></svg><svg class="i"><use href="#more"/></svg></li>
              <li><i style="background:#e800d0"></i><span>Pink</span><svg class="i"><use href="#addfill"/></svg><svg class="i"><use href="#addline"/></svg><svg class="i"><use href="#more"/></svg></li>
              <li><i style="background:#5a26e0"></i><span>Purple</span><svg class="i"><use href="#addfill"/></svg><svg class="i"><use href="#addline"/></svg><svg class="i"><use href="#more"/></svg></li>
            </ul>
          </div>
        </section>
        <section class="panel align">
          <div class="tabs"><button class="on">Align</button></div>
          <div class="al"><span>Alignment</span><span class="trio"><svg class="i"><use href="#alL"/></svg><svg class="i"><use href="#alC"/></svg><svg class="i"><use href="#alR"/></svg></span><span class="trio"><svg class="i"><use href="#alT"/></svg><svg class="i"><use href="#alM"/></svg><svg class="i"><use href="#alB"/></svg></span></div>
          <div class="al"><span>Distribution</span><span class="trio"><svg class="i"><use href="#dV"/></svg><svg class="i"><use href="#dH"/></svg><svg class="i"><use href="#dS"/></svg></span><span class="trio"></span></div>
        </section>
      </aside>
    </div>

    <section class="panel scene">
      <div class="tabs"><button class="on">Scene Window</button><button>JavaScript Editor</button><button>Dependency Graph</button></div>
      <div class="scene-body">
        <div class="layers">
          <div class="lsearch">
            <label class="search"><svg class="i"><use href="#search"/></svg><input placeholder="Enter a layer name" aria-label="Layer name"></label>
            <button class="tb"><svg class="i"><use href="#plus"/></svg></button>
            <span class="trio3"><button class="tb"><svg class="i l"><use href="#sphere"/></svg></button><button class="tb"><svg class="i"><use href="#dots4"/></svg></button><button class="tb"><svg class="i"><use href="#sliders"/></svg></button></span>
            <span class="num frameno"><b>F</b><input aria-label="Frame" value="0"></span>
          </div>
          <div class="lhead"><svg class="i"><use href="#lock"/></svg><svg class="i"><use href="#eye"/></svg><svg class="i"><use href="#box"/></svg><svg class="i"><use href="#sound"/></svg><svg class="i dim"><use href="#dropper"/></svg><svg class="i"><use href="#tag"/></svg><span>Name</span></div>
          <div class="lwrap">
            <div class="lrows">
              <div class="lay"><svg class="i vis"><use href="#okring"/></svg><i class="sw" style="background:#ccf48a"></i><svg class="i"><use href="#tag"/></svg><svg class="i s dim"><use href="#chev"/></svg><svg class="i s"><use href="#dot"/></svg><svg class="i ty dim"><use href="#plain"/></svg><span>Auto-Animate</span><svg class="i cx"><use href="#connout"/></svg><svg class="i s faint"><use href="#ring"/></svg></div>
              <div class="lay prog"><span class="branch"></span><span>Progress</span><span class="num"><b>%</b><input aria-label="Progress" value="0.0"></span><i class="diamond"></i></div>
              <div class="lay"><svg class="i vis"><use href="#okring"/></svg><i class="sw" style="background:#ec80ad"></i><svg class="i"><use href="#tag"/></svg><i></i><i></i><svg class="i ty l"><use href="#grad"/></svg><span>Gradient Shader [Text Animation]</span><svg class="i cx"><use href="#connout"/></svg><svg class="i s faint"><use href="#ring"/></svg></div>
              <div class="lay"><svg class="i vis"><use href="#okring"/></svg><i class="sw" style="background:#ec80ad"></i><svg class="i"><use href="#tag"/></svg><i></i><i></i><svg class="i ty"><use href="#blur"/></svg><span>Fast Blur [Text Animation]</span><svg class="i cx"><use href="#connout"/></svg><svg class="i s faint"><use href="#ring"/></svg></div>
              <div class="lay cur"><svg class="i vis"><use href="#eye"/></svg><i class="sw" style="background:#b18eef"></i><svg class="i"><use href="#tag"/></svg><i></i><i></i><svg class="i ty yel"><use href="#textbox"/></svg><span>Text Animation</span><svg class="i cx yel"><use href="#conn"/></svg><svg class="i s faint"><use href="#ring"/></svg></div>
            </div>
            <div class="vscroll full"><i></i></div>
          </div>
          <div class="hscroll"></div>
          <div class="lfoot"><svg class="i"><use href="#tag"/></svg><span>1 selected</span><button class="tb"><svg class="i"><use href="#blur"/></svg></button><span class="seg2"><button class="on"><svg class="i"><use href="#te"/></svg>Time Editor</button><button><svg class="i"><use href="#graph"/></svg>Graph Editor</button></span></div>
        </div>
        <div class="split"><i></i></div>
        <div class="time">
          <h2>Composition 1</h2>
          <div class="truler"><span>0</span><span>10</span><span>20</span><span>30</span><span>40</span><span>50</span><span>60</span><span>70</span><span>80</span><span>90</span><span>100</span><span>110</span><span>120</span><span>130</span><span>140</span><span>150</span><span>160</span><span>170</span><span>180</span><span>190</span><span>200</span><span>210</span><span>220</span><span>230</span><span>240</span><span class="end">250</span></div>
          <div class="range"><i></i><i></i></div>
          <div class="tracks">
            <div class="bar2 lime">Auto-Animate</div>
            <div class="keyline"><i></i><b></b><i></i></div>
            <div class="bar2 pink">Gradient Shader [Text Animation]</div>
            <div class="bar2 pink">Fast Blur [Text Animation]</div>
            <div class="bar2 violet">Text Animation</div>
          </div>
          <div class="hscroll"></div>
          <div class="tfoot">
            <button class="tb kf"><svg class="i"><use href="#keys"/></svg>Default Keyframe Layer</button>
            <span class="num"><input aria-label="Keyframe value" value="–"></span>
            <span>Align:</span><span class="trio"><svg class="i"><use href="#alL"/></svg><svg class="i"><use href="#alC"/></svg><svg class="i"><use href="#alR"/></svg></span>
            <button class="tb"><svg class="i"><use href="#blur"/></svg></button><button class="tb"><svg class="i"><use href="#magnet"/></svg><svg class="i s dim"><use href="#tri"/></svg></button><button class="tb"><svg class="i"><use href="#alM"/></svg><svg class="i s dim"><use href="#tri"/></svg></button>
            <span class="push"></span>
            <svg class="i dim"><use href="#zout"/></svg><input type="range" class="slider thin" value="0" aria-label="Timeline zoom"><svg class="i dim"><use href="#zin"/></svg>
          </div>
          <i class="playhead"></i>
        </div>
      </div>
    </section>
  </div>
</main>
<svg class="cursor" viewBox="0 0 16 24"><path d="M1 1v18l4-4 3 7 4-2-3-6h6z" fill="#fff" stroke="#333"/></svg>
<p class="caption">Now, by default, this is just going to</p>
</body>
</html>
```
FILE: styles.css
```css
* { box-sizing: border-box; }
body {
  margin: 0; min-height: 100vh; padding: 27px 0 28px; background: #000;
  display: flex; flex-direction: column; position: relative;
  font: 500 11px/14px "Noto Sans", "Open Sans", sans-serif; color: #dedede;
}
p, h2, ul { margin: 0; padding: 0; font: inherit; list-style: none; }
a { color: inherit; text-decoration: none; }
i { font-style: normal; }
button { font: inherit; color: inherit; background: none; border: 0; padding: 0; display: flex; align-items: center; justify-content: center; white-space: nowrap; }
input, textarea, select { font: inherit; color: inherit; background: none; border: 0; padding: 0; margin: 0; min-width: 0; outline: 0; }
input::placeholder { color: #858585; opacity: 1; }
.sprite { position: absolute; width: 0; height: 0; }
svg { fill: none; stroke: currentColor; stroke-width: 1.4; }
.f { fill: currentColor; stroke: none; }
.i { width: 11px; height: 11px; flex: none; }
.i.s { width: 8px; height: 8px; }
.i.l { width: 14px; height: 14px; }
.dim { color: #a0a0a0; }
.faint { color: #6a6a6a; }
.yel { color: #dede95; }
.mint { color: #9fd6b4; }
.push { flex: 1; }
.row { display: flex; align-items: center; }

/* Menu and toolbars */
.menubar { display: flex; justify-content: space-between; background: #202020; height: 23px; }
.menu { display: flex; gap: 6px; padding: 1px 3px; color: #b5b5b5; }
.menu a:nth-child(-n+4) { margin-right: 1px; }
.brand { position: absolute; top: 2px; right: 6px; display: flex; flex-direction: column; align-items: flex-end; font: 300 14px/14px Roboto, sans-serif; color: #2b2b2b; }
.toolbars { display: grid; grid-template-columns: 954fr 952fr; gap: 5px; padding: 0 4px 5px 5px; background: #1a1a1a; }
.toolbar { display: flex; align-items: center; height: 22px; background: #3b3b3b; padding-left: 3px; }
.grip { width: 3px; height: 10px; margin-right: 6px; border-left: 1px dotted #777; }
.num { display: flex; align-items: center; width: 70px; height: 13px; background: #262626; flex: none; }
.num b { width: 13px; text-align: center; color: #636363; font-weight: 400; flex: none; }
.num input { flex: 1; width: 10px; height: 13px; }
.snap { width: 45px; margin: 0 8px 0 3px; }
.manip { margin-right: 4px; }
.tick { appearance: none; width: 12px; height: 12px; background: #2a2a2a; flex: none; }
.tick:checked { background: #222 url("data:image/svg+xml,%3Csvg xmlns='http://www.w3.org/2000/svg' viewBox='0 0 12 12'%3E%3Cpath d='M2 6l3 4 6-8' fill='none' stroke='%23ccc' stroke-width='1.300'/%3E%3C/svg%3E"); }
.tick.green:checked { background: #1e3028 url("data:image/svg+xml,%3Csvg xmlns='http://www.w3.org/2000/svg' viewBox='0 0 12 12'%3E%3Cpath d='M2 6l3 4 6-8' fill='none' stroke='%237fe0b0' stroke-width='1.500'/%3E%3C/svg%3E"); }
.seg { display: flex; margin-left: 8px; border: 1px solid #5a5a5a; color: #aaa; height: 14px; }
.seg button { gap: 1px; padding: 0 2px; background: #2c2c2c; }
.seg .on { background: #666; color: #b8b8b8; }
.tb { gap: 1px; height: 14px; background: #2b2b2b; padding: 0 1px; border-radius: 1px; }
.demo { height: 17px; padding: 0; }
.quick { flex: 1; display: flex; justify-content: flex-end; gap: 4px; padding-right: 4px; }
.quick button { width: 18px; height: 18px; background: #2e2e2e; }
.quick .gap { margin-left: 5px; }

/* Panels */
.work { flex: 1; display: grid; grid-template-columns: 503px 1fr; gap: 6px; padding: 0 4px 4px 5px; background: #1b1b1b; }
.left { display: flex; flex-direction: column; gap: 4px; min-width: 0; }
.right { display: grid; grid-template-rows: 1fr 331px; gap: 4px; min-width: 0; }
.top { display: grid; grid-template-columns: 22px minmax(0, 1fr) 245px; gap: 5px; }
.panel { display: flex; flex-direction: column; min-width: 0; }
.tabs { display: flex; height: 17px; flex: none; }
.tabs button { padding: 0 4px; }
.tabs .on { background: #444; }
.search { display: flex; align-items: center; gap: 6px; flex: 1; height: 15px; padding-left: 4px; background: #272727; border-radius: 0 8px 8px 0; }
.search input { flex: 1; height: 15px; }
.search.flat { flex: none; border-radius: 0; background: #2d2d2d; margin-left: 4px; height: 16px; padding-left: 2px; }
.sel {
  appearance: none; height: 14px; padding: 0 14px 0 3px;
  background: #4d4d4d url("data:image/svg+xml,%3Csvg xmlns='http://www.w3.org/2000/svg' viewBox='0 0 8 8'%3E%3Cpath d='M1 2l3 3 3-3' fill='none' stroke='%23999'/%3E%3C/svg%3E") right 4px center / 8px 8px no-repeat;
}
.sel.dark { background-color: #292929; }
.sw { width: 13px; height: 13px; border-radius: 1px; flex: none; }

/* Assets */
.assets { height: 326px; flex: none; }
.search-row { height: 18px; background: #444; gap: 3px; padding-right: 2px; }
.sort { width: 45px; }
.asset-head { height: 16px; background: #444; padding-left: 4px; gap: 20px; }
.asset-row { height: 17px; background: #363636; padding: 0 4px 0 2px; gap: 5px; }
.asset-row .i { margin-left: 15px; }
.asset-row a { color: #55d494; }
.meta { margin-left: auto; }
.drop { flex: 1; background: #282828; display: flex; flex-direction: column; align-items: center; justify-content: center; gap: 6px; padding-bottom: 10px; color: #9b9b9b; }
.hit { width: 18px; height: 21px; }
.path { height: 13px; line-height: 13px; background: #2c2c2c; color: #858585; padding-left: 4px; }
.asset-foot { height: 17px; background: #444; padding: 0 3px; gap: 4px; }
.proj { width: 150px; }

/* Attribute editor */
.attrs { flex: 1; }
.attr-search { height: 19px; background: #444; gap: 4px; padding-right: 2px; }
.attr-search .search { margin-right: 5px; }
.attr-wrap { flex: 1; display: flex; background: #333; padding-top: 2px; }
.attr-body { flex: 1; min-width: 0; background: #373737; border-left: 2px solid #3f7f52; }
.attr-head { display: flex; align-items: center; gap: 3px; height: 17px; padding: 0 6px 0 2px; margin-left: -2px; background: #3a363c; border: 2px solid #9278c8; border-bottom: 0; }
.attr-head h2 { flex: 1; }
.attr-head h2 ~ .i { margin-left: 2px; }
.subtabs { display: grid; grid-template-columns: repeat(6, 1fr); height: 18px; padding-left: 58px; background: #242424; color: #a6a6a6; }
.subtabs button { position: relative; }
.subtabs .on { background: #444; color: #dedede; }
.subtabs .bar::before { content: ""; position: absolute; left: 0; top: 5px; height: 9px; border-left: 1px solid #888; }
.subtabs .bar .white, .subtabs .bar .i { position: absolute; left: 5px; }
.white { width: 7px; height: 7px; background: #fff; }
.grp { display: grid; grid-auto-rows: 1fr; margin-right: 2px; padding: 5px 0 3px; border-bottom: 1px solid #2c2c2c; }
.g5 { height: 92px; }
.g5.first { padding: 1px 0; height: 86px; }
.g15 { height: 255px; padding: 2px 0 3px; }
.g4 { height: 74px; padding: 3px 0 4px; border: 0; }
.at { display: grid; grid-template-columns: 7px 248px 70px; grid-auto-columns: max-content; grid-auto-flow: column; align-items: center; column-gap: 5px; padding-left: 4px; }
.o { width: 6px; height: 6px; border: 1px solid #777; border-radius: 3px; }
.hot { background: #454545; }
.mute label { color: #929292; }
.wide { grid-column: 3 / span 2; width: 145px; }
.full { width: 220px; }
.off { background: #2f2f2f; color: #6a6a6a; }
.full.off { color: #4c4c4c; }
.off b { color: #505050; }
.list { color: #777; gap: 4px; padding-left: 2px; }
.cn { margin-left: auto; margin-right: 4px; color: #c8c8a0; }
.add { width: 13px; padding: 0; margin-left: -3px; }
.minis { display: flex; gap: 4px; margin-left: 74px; }
.pinkish { color: #d8a5ae; }
.string { padding: 5px 2px 0 4px; height: 69px; }
.string-head { display: flex; align-items: center; height: 14px; }
.string-head label { flex: 1; margin-left: 6px; }
.string-head .tb { margin-left: 5px; }
.area { display: flex; margin: 3px 0 0 11px; height: 47px; background: #252525; padding: 3px 4px; font: 500 9px/12px Inter, sans-serif; gap: 6px; }
.area span { color: #444; }
.area textarea { flex: 1; resize: none; color: #e6e6e6; }
.fontrow { display: flex; align-items: center; gap: 2px; width: 220px; }
.fontrow .sel:first-child { flex: 1; }
.fontrow .sel + .sel { width: 74px; }
.styles { display: flex; gap: 2px; color: #bbb; font-size: 9px; width: 92px; }
.styles button { width: 13px; height: 13px; background: #2c2c2c; }
.aligns { display: flex; width: 62px; height: 14px; background: #666; border-radius: 2px; color: #bdbdbd; }
.aligns button { flex: 1; }
.aligns .on { background: #1f2a25; color: #63d39a; }
.auto { display: flex; align-items: center; gap: 4px; margin-left: 5px; }
.vscroll { width: 9px; margin-left: 1px; background: #2c2c2c; }
.vscroll i { display: block; height: 88%; background: #4a4a4a; border-radius: 0 0 4px 4px; }
.vscroll.full { width: 7px; margin-left: 3px; }
.vscroll.full i { height: 100%; }

/* Tools */
.tools { background: #444; }
.handle { display: block; width: 8px; height: 4px; margin: 1px auto 2px; border-bottom: 1px dotted #999; }
.toollist { display: grid; grid-auto-rows: 1fr; height: 432px; color: #e0e0e0; }
.toollist .on { background: #161c19; color: #4fc98c; border: 1px solid #333; }

/* Viewport */
.hruler { display: grid; grid-template-columns: repeat(22, 1fr); height: 15px; flex: none; background: #4b4b4b; padding: 0 5px 0 38px; font-size: 9px; line-height: 11px; text-align: center; color: #b5b5b5; font-weight: 400; }
.hruler span { background: linear-gradient(90deg, transparent 4px, #777 4px 5px, transparent 5px) 0 100% / 20% 3px repeat-x; }
.stage { flex: 1; display: flex; min-height: 0; }
.vruler { width: 15px; flex: none; display: grid; grid-auto-rows: 1fr; background: #4b4b4b; padding: 25px 0 24px; font-size: 9px; line-height: 10px; color: #b5b5b5; font-weight: 400; }
.vruler span { writing-mode: vertical-rl; transform: rotate(180deg); text-align: center; padding-right: 4px; background: linear-gradient(transparent 4px, #777 4px 5px, transparent 5px) 0 0 / 3px 20% repeat-y; }
.canvas { flex: 1; min-width: 0; height: 595px; background: #000; stroke-width: 1; }
.outline { font: 400 111px Inter, sans-serif; fill: none; stroke: #2a8a38; }
.tagname { font: 600 10px Roboto, sans-serif; fill: #f2f2f2; stroke: none; }
.quality { font: 400 9px Inter, sans-serif; fill: #e5e5e5; stroke: none; text-anchor: middle; }
.viewbar { display: grid; grid-template-columns: 382fr 92px 644fr; align-items: center; height: 17px; background: #444; padding: 0 3px 0 4px; }
.zoom { width: 58px; }
.transport { display: flex; gap: 1px; }
.transport button { width: 14px; height: 14px; background: #2c2c2c; color: #c5c5c5; }
.transport button:last-child { margin-left: 3px; }
.opts { display: flex; justify-content: flex-end; gap: 2px; }
.opts button { width: 24px; height: 14px; background: #2c2c2c; gap: 3px; color: #c0c0c0; }
.opts button:first-child { width: 28px; gap: 6px; }
.opts .one, .opts .one:last-child { width: 16px; }
.opts .gr { color: #4cc77c; }
.opts .i.s, .zero { color: #8a8a8a; }

/* Colour */
.side { display: flex; flex-direction: column; gap: 5px; min-width: 0; overflow: hidden; }
.color { flex: 1; background: linear-gradient(#1b1b1b 17px, #434343 17px); }
.picker { display: flex; justify-content: center; padding: 9px 0 10px 9px; }
.wheel { position: relative; width: 151px; height: 151px; border-radius: 50%; display: grid; place-items: center; background: conic-gradient(from 90deg, #f00, #f08 25deg, #e0c 50deg, #80f 95deg, #00e 125deg, #08f 155deg, #0fd 180deg, #0f4 215deg, #0f0 240deg, #df0 290deg, #fb2 315deg, #f60 335deg, #f00); }
.hole { width: 113px; height: 113px; border-radius: 50%; background: #434343; display: grid; place-items: center; }
.sv { width: 68px; height: 68px; background: linear-gradient(90deg, #000, transparent), linear-gradient(#fff, #e0001c); }
.knob { position: absolute; width: 10px; height: 10px; border: 1px solid #eee; border-radius: 50%; }
.k1 { left: 69px; top: 38px; }
.k2 { right: 6px; top: 71px; }
.cname { height: 18px; padding-left: 4px; gap: 3px; }
.gray { width: 17px; height: 17px; background: #777; border-radius: 2px; }
.cname .tb { margin-left: auto; height: 16px; }
.hexrow { height: 18px; margin-top: 2px; padding-left: 4px; gap: 4px; }
.hexsel { width: 37px; }
.hexrow .num { flex: 1; height: 17px; background: #2a2a2a; }
.alpha { height: 18px; padding-left: 4px; gap: 7px; }
.alpha .slider { flex: 1; }
.alpha .num { width: 29px; }
.slider { appearance: none; height: 10px; background: linear-gradient(#ddd, #ddd) 0 50% / 100% 3px no-repeat; }
.slider::-webkit-slider-thumb { appearance: none; width: 8px; height: 8px; border-radius: 50%; background: #7fd0ab; }
.halves { display: grid; grid-template-columns: 1fr 1fr; height: 15px; margin: 3px 0 0 3px; background: #262626; color: #999; }
.halves .on { background: #4b4b4b; color: #dedede; }
.libs { height: 18px; padding-left: 4px; overflow: hidden; }
.libs button { flex: none; height: 14px; background: #4b4b4b; gap: 2px; padding: 0 3px; }
.libs .last { margin-left: auto; }
.libs .on { background: #242a27; }
.libs .on .i { color: #63d39a; }
.cav { height: 13px; padding-left: 3px; gap: 4px; }
.cav .sel { flex: 1; }
.swatches { flex: 1; display: flex; margin: 3px 3px 0 3px; padding-top: 1px; background: #282828; border-right: 2px solid #282828; }
.swatches ul { flex: 1; display: grid; grid-auto-rows: 1fr; height: 149px; }
.swatches li { display: flex; align-items: center; gap: 5px; padding: 0 4px 0 3px; background: #363636; border-bottom: 1px solid #2e2e2e; }
.swatches li i { width: 14px; height: 14px; border-radius: 2px; }
.swatches li span { flex: 1; }
.align { height: 68px; background: linear-gradient(#1b1b1b 17px, #434343 17px); }
.al { display: flex; align-items: center; height: 22px; padding: 4px 8px 0 6px; gap: 8px; }
.al > span:first-child { flex: 1; }
.trio { display: flex; gap: 2px; width: 37px; }

/* Scene window */
.scene { min-width: 0; }
.scene-body { flex: 1; display: flex; border-top: 1px solid #4c9067; background: linear-gradient(#35453c, #424242 6px, #424242 17px, #1d1d1d 17px); }
.layers { width: 530px; flex: none; display: flex; flex-direction: column; padding-top: 17px; }
.lsearch { display: flex; align-items: center; height: 16px; background: #424242; padding-left: 2px; }
.lsearch .search { margin-right: 4px; }
.trio3 { display: flex; gap: 3px; margin: 0 3px 0 17px; }
.trio3 .tb { width: 14px; }
.frameno { margin-right: 2px; }
.lhead { display: flex; align-items: center; height: 15px; background: #424242; padding-left: 3px; gap: 3px; color: #c8c8c8; }
.lhead span { margin-left: 28px; }
.lwrap { flex: 1; display: flex; }
.lrows { flex: 1; background: #272727; }
.lay { display: grid; grid-template-columns: 27px 41px 11px 8px 8px 17px 1fr 18px 8px; column-gap: 3px; align-items: center; height: 17px; line-height: 16px; padding-right: 2px; white-space: nowrap; background: linear-gradient(90deg, #232323 43px, #363636 43px); }
.vis { justify-self: end; color: #a8a8a8; }
.lay .sw { justify-self: end; }
.ty { justify-self: end; }
.cx { justify-self: end; margin-right: 3px; }
.cx:not(.yel) { color: #a678b8; }
.prog { grid-template-columns: 112px 1fr 56px 16px; height: 16px; background: #363636; }
.prog .num { width: 52px; background: #2e2e2e; }
.branch { justify-self: end; width: 8px; height: 8px; border-left: 1px dotted #aaa; border-bottom: 1px dotted #aaa; margin-bottom: 6px; }
.diamond { width: 5px; height: 5px; background: #4cd08f; transform: rotate(45deg); }
.cur { background: linear-gradient(90deg, #2a2a2a 43px, #48435a 43px); }
.hscroll { height: 7px; background: #484848; border-radius: 4px; margin: 2px 9px 2px 0; flex: none; }
.lfoot { display: flex; align-items: center; gap: 4px; height: 16px; padding-left: 4px; background: #424242; }
.lfoot > span:nth-child(2) { flex: 1; }
.seg2 { display: flex; height: 14px; }
.seg2 button { gap: 2px; padding: 0 3px; background: #505050; color: #c5c5c5; }
.seg2 .on { background: #222; color: #e5e5e5; }
.seg2 .on .i { color: #63d39a; }
.split { width: 5px; display: grid; place-items: center; }
.split i { width: 3px; height: 14px; border: 1px dotted #777; }
.time { flex: 1; display: flex; flex-direction: column; position: relative; min-width: 0; background: linear-gradient(transparent 17px, #1d1d1d 17px); }
.time h2 { height: 17px; line-height: 17px; padding-left: 129px; }
.truler { display: grid; grid-template-columns: repeat(25, 1fr) 0; height: 18px; padding: 0 9px; line-height: 12px; text-align: center; background: #222; }
.truler span { width: 34px; margin-left: -17px; background: linear-gradient(#888, #888) 50% 100% / 1px 6px no-repeat, linear-gradient(90deg, transparent 3px, #5a5a5a 3px 4px, transparent 4px) 0 100% / 20% 3px repeat-x; }
.truler .end { color: #4a4a4a; background: none; }
.range { display: flex; justify-content: space-between; height: 13px; padding: 0 5px; background: #424242; }
.range i { width: 4px; background: #8fc0ae; }
.tracks { flex: 1; display: flex; flex-direction: column; gap: 3px; margin: 1px 9px 0; background: #272727; }
.bar2 { height: 14px; padding-left: 6px; line-height: 13px; font-size: 10px; }
.lime { color: #3d4f24; background: linear-gradient(90deg, #cdf588 70px, transparent 90px), repeating-linear-gradient(135deg, #cdf588 0 13px, #b4dc78 13px 20px); }
.pink { color: #ffe2ee; background: repeating-linear-gradient(135deg, #f07ab2 0 11px, #d9649c 11px 15px, #e870a8 15px 20px); }
.violet { color: #f5eaff; line-height: 11px; border: 1px solid #dcc4f5; background: repeating-linear-gradient(90deg, #b98ae6 0 1px, #cfa6f5 1px 3px); }
.keyline { display: flex; align-items: center; width: 209px; height: 13px; margin-left: -2px; }
.keyline i { width: 5px; height: 5px; background: #c9cbb4; transform: rotate(45deg); }
.keyline b { flex: 1; height: 2px; background: #b9c380; }
.time .hscroll { margin-right: 0; }
.tfoot { display: flex; align-items: center; gap: 5px; height: 16px; padding: 0 9px 0 4px; background: #424242; }
.kf { width: 130px; justify-content: flex-start; overflow: hidden; gap: 5px; }
.tfoot .num { width: 52px; }
.tfoot .num input { padding-left: 12px; }
.thin { width: 92px; background-image: linear-gradient(#5a5a5a, #5a5a5a); }
.playhead { position: absolute; left: 9px; top: 27px; bottom: 26px; border-left: 1px solid #7a8f86; }
.playhead::before { content: ""; position: absolute; left: -6px; top: 0; border: 6px solid transparent; border-top: 7px solid #8fc0ae; }

.cursor { position: absolute; left: 1024px; top: 786px; width: 11px; height: 16px; }
.caption { position: absolute; left: 546px; top: 969px; font: 400 53px/60px "Liberation Sans", sans-serif; color: #fff; text-shadow: 2px 2px 3px #000; white-space: nowrap; }
```
